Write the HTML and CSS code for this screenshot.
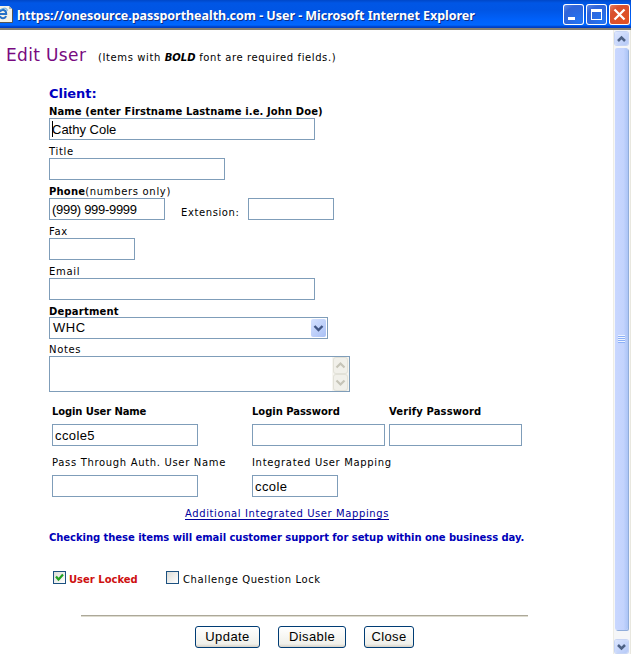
FILE: index.html
```html
<!DOCTYPE html>
<html lang="en">
<head>
<meta charset="utf-8">
<title>User</title>
<link rel="stylesheet" href="styles.css">
</head>
<body>
<div class="window">
  <header class="titlebar">
    <svg class="app-icon" width="13" height="18" viewBox="0 0 13 18"><path d="M0 1h9l3 3v13H0z" fill="#f4f2e6"/><path d="M9 1v3h3z" fill="#b8b8a8"/><path d="M12.5 4v13.5H0" fill="none" stroke="#555" /><path d="M0 9h6.200c0-5-5-5-6.200-2M6 11c-1 3-5 3-6 0" fill="none" stroke="#2671c8" stroke-width="2"/><path d="M0 5c4-3 8-2 7 1" fill="none" stroke="#55a5e5"/></svg>
    <h1 class="caption">https://onesource.passporthealth.com - User - Microsoft Internet Explorer</h1>
    <div class="controls">
      <span class="control"><svg width="21" height="21"><path d="M5 13h7v3H5z" fill="#fff"/></svg></span>
      <span class="control"><svg width="21" height="21"><path d="M5 5h11v11H5zM6 8v7h9V8z" fill="#fff" fill-rule="evenodd"/></svg></span>
      <span class="control control-close"><svg width="21" height="21"><path d="M5.500 5.500l10 10M15.500 5.500l-10 10" stroke="#fff" stroke-width="2.300"/></svg></span>
    </div>
  </header>
  <div class="viewport">
    <main class="page">
      <div class="heading"><h2>Edit User</h2><p>(Items with <b><i>BOLD</i></b> font are required fields.)</p></div>
      <form class="form">
        <h3>Client:</h3>
        <div class="label"><b class="t-name">Name (enter Firstname Lastname i.e. John Doe)</b></div>
        <div class="box w266"><span class="caret"></span><span class="v-name">Cathy Cole</span></div>
        <div class="label">Title</div>
        <div class="box w176"></div>
        <div class="label"><b class="t-phone">Phone</b><span>(numbers only)</span></div>
        <div class="row"><div class="box w116"><span class="v-phone">(999) 999-9999</span></div><span class="extension">Extension:</span><div class="box w86"></div></div>
        <div class="label">Fax</div>
        <div class="box w86"></div>
        <div class="label">Email</div>
        <div class="box w266"></div>
        <div class="label label-short"><b class="t-phone">Department</b></div>
        <div class="box select"><span class="v-whc">WHC</span><span class="drop"><svg width="15" height="18"><path d="M3.500 7l4 4 4-4" fill="none" stroke="#415684" stroke-width="2.400"/></svg></span></div>
        <div class="label label-notes">Notes</div>
        <div class="box notes"><div class="notes-scroll"><span><svg width="13" height="15"><path d="M2.500 9.500l4-4 4 4" fill="none" stroke="#c6c4b8" stroke-width="2.200"/></svg></span><span><svg width="13" height="15"><path d="M2.500 5.500l4 4 4-4" fill="none" stroke="#c6c4b8" stroke-width="2.200"/></svg></span></div></div>
        <div class="logins">
          <b class="t-lun">Login User Name</b><b class="t-lp">Login Password</b><b class="t-vp">Verify Password</b>
          <div class="box w146"><span class="v-ccole">ccole5</span></div><div class="box w133"></div><div class="box w133"></div>
          <span>Pass Through Auth. User Name</span><span>Integrated User Mapping</span><span></span>
          <div class="box w146"></div><div class="box w86"><span class="v-ccole">ccole</span></div>
        </div>
        <a class="mappings">Additional Integrated User Mappings</a>
        <p class="notice">Checking these items will email customer support for setup within one business day.</p>
        <div class="checks">
          <span class="check"><svg width="11" height="11"><path d="M2 4.500l2.500 3L9 2.500" fill="none" stroke="#21a121" stroke-width="2.200"/></svg></span><b class="locked">User Locked</b>
          <span class="check"></span><span class="challenge">Challenge Question Lock</span>
        </div>
        <hr>
        <div class="buttons"><button class="b-update" type="button">Update</button><button class="b-disable" type="button">Disable</button><button class="b-close" type="button">Close</button></div>
      </form>
    </main>
    <aside class="scrollbar">
      <span class="arrow"><svg width="13" height="14"><path d="M3 9l3.500-3.500L10 9" fill="none" stroke="#4d6185" stroke-width="2.500"/></svg></span>
      <div class="thumb"><i></i></div>
      <span class="arrow"><svg width="13" height="14"><path d="M3 5l3.500 3.500L10 5" fill="none" stroke="#4d6185" stroke-width="2.500"/></svg></span>
    </aside>
  </div>
</div>
</body>
</html>
```
FILE: styles.css
```css
* { box-sizing: border-box; }
body { margin: 0; background: #fff; color: #000; font: 10px/14px "DejaVu Sans", sans-serif; overflow: hidden; }
h1, h2, h3, p { margin: 0; }
svg { display: block; flex: none; }
b { letter-spacing: 0; }
.window { width: 631px; height: 654px; display: flex; flex-direction: column; }
.titlebar { height: 30px; flex: none; display: flex; align-items: flex-start; background: linear-gradient(#0047c7, #0056e5 3px, #0055e4 10px, #0061fb 20px, #0067ff 25px, #003fc4 27px, #003fc4 28px, #858174 28px); padding: 4px 1px 0 0; }
.app-icon { margin-top: 1px; }
.caption { flex: 1; margin: 1px 0 0 4px; font: bold 12.500px/22px "Noto Sans", sans-serif; letter-spacing: -.04px; color: #fff; text-shadow: 1px 1px #092d87; white-space: nowrap; }
.controls { display: flex; gap: 2px; }
.control { width: 21px; height: 21px; border-radius: 3px; box-shadow: inset 0 0 0 1px #fff; background: radial-gradient(circle at 75% 80%, #2374f3, #2f63d8 65%, #6b91e8); }
.control-close { background: radial-gradient(circle at 75% 80%, #e25122, #d8502e 65%, #e98b70); }
.viewport { flex: 1; display: flex; min-height: 0; }
.page { width: 613px; padding-top: 15px; white-space: nowrap; }
.heading { display: flex; align-items: baseline; padding-left: 6px; height: 40px; }
.heading h2 { font: 17px/20px "DejaVu Sans", sans-serif; letter-spacing: .35px; color: #780a80; width: 92px; }
.heading p { letter-spacing: .6px; }
.form { padding-left: 49px; letter-spacing: .67px; }
h3 { font: bold 13px/17px "DejaVu Sans", sans-serif; letter-spacing: -.05px; color: #0000c0; height: 15px; }
.label { height: 18px; padding-top: 5px; }
.label-short { height: 17px; }
.label-notes { height: 17px; padding-top: 4px; }
.t-name { letter-spacing: .1px; }
.t-phone { letter-spacing: .2px; }
.t-vp { letter-spacing: .12px; }
.t-lun { letter-spacing: -.12px; }
.t-lp { letter-spacing: -.04px; }
.box { border: 1px solid #7f9db9; height: 22px; background: #fff; padding-left: 2px; font: 13px/20px "Liberation Sans", sans-serif; letter-spacing: 0; display: flex; align-items: center; }
.v-name { padding-top: 1px; }
.v-phone { letter-spacing: -.3px; padding-top: 1px; }
.v-ccole { letter-spacing: .4px; padding-top: 1px; }
.v-whc { letter-spacing: .6px; }
.w266 { width: 266px; } .w176 { width: 176px; } .w116 { width: 116px; } .w86 { width: 86px; } .w146 { width: 146px; } .w133 { width: 133px; }
.caret { width: 1px; height: 16px; background: #000; margin-right: -1px; }
.row { display: flex; }
.extension { width: 83px; padding: 8px 0 0 16px; letter-spacing: .6px; }
.select { width: 279px; padding: 0 1px 0 3px; justify-content: space-between; }
.drop { width: 15px; height: 18px; border-radius: 2px; background: linear-gradient(135deg, #d5e2ff, #a9c0f5); }
.notes { width: 301px; height: 36px; justify-content: flex-end; }
.notes-scroll { width: 17px; height: 34px; padding: 1px 2px; background: #f7f6f1; display: flex; flex-direction: column; gap: 2px; }
.notes-scroll span { border-radius: 2px; background: #f1f0ea; box-shadow: 0 0 0 1px #e2e1d8; }
.logins { display: grid; grid-template-columns: 200px 137px 133px; grid-template-rows: 19px 22px 29px 22px; padding: 13px 0 0 3px; }
.logins > b { line-height: 13px; }
.logins > span { padding-top: 10px; }
.mappings { display: block; width: 204px; height: 13px; line-height: 13px; margin: 10px 0 0 136px; letter-spacing: .6px; color: #00009c; border-bottom: 1px solid #00009c; }
.notice { margin-top: 11px; font-weight: bold; letter-spacing: -.05px; color: #0000b8; }
.checks { display: flex; align-items: flex-start; margin: 26px 0 0 4px; }
.check { width: 13px; height: 13px; border: 1px solid #1c5180; background: linear-gradient(135deg, #dcdcd7, #fff); }
.locked { color: #ce1010; margin: 2px 0 0 3px; width: 97px; }
.challenge { margin: 2px 0 0 4px; letter-spacing: .6px; }
hr { width: 447px; height: 2px; margin: 28px 0 9px 32px; border: 0; background: #aca899; border-bottom: 1px solid #dedccf; }
.buttons { display: flex; gap: 18px; padding-left: 146px; }
button { height: 22px; padding: 0; border: 1px solid #003c74; border-radius: 3px; background: linear-gradient(#fff, #f0f0ea 85%, #d6d0c5); color: #000; font: 13px/18px "Liberation Sans", sans-serif; letter-spacing: .4px; }
.b-update { width: 65px; } .b-disable { width: 68px; } .b-close { width: 50px; }
.scrollbar { width: 18px; background: #f5f6f8; padding: 2px 3px 0 1px; display: flex; flex-direction: column; border-left: 1px solid #eeede5; border-right: 1px solid #e8e7df; gap: 3px; }
.arrow { width: 13px; height: 13px; border-radius: 2px; background: linear-gradient(135deg, #dce6ff, #b5c9f7); box-shadow: 0 0 0 1px #c7d5f5; flex: none; }
.thumb { width: 13px; height: 582px; flex: none; border-radius: 2px; background: linear-gradient(90deg, #c9d7ff, #c3d3fd 65%, #acc4f6); box-shadow: 1px 1px 0 #91adda; display: flex; align-items: center; justify-content: center; margin-bottom: 7px; }
.thumb i { width: 7px; height: 8px; background: repeating-linear-gradient(#eef4fe 0 1px, #8cb0f8 1px 2px); }
```
